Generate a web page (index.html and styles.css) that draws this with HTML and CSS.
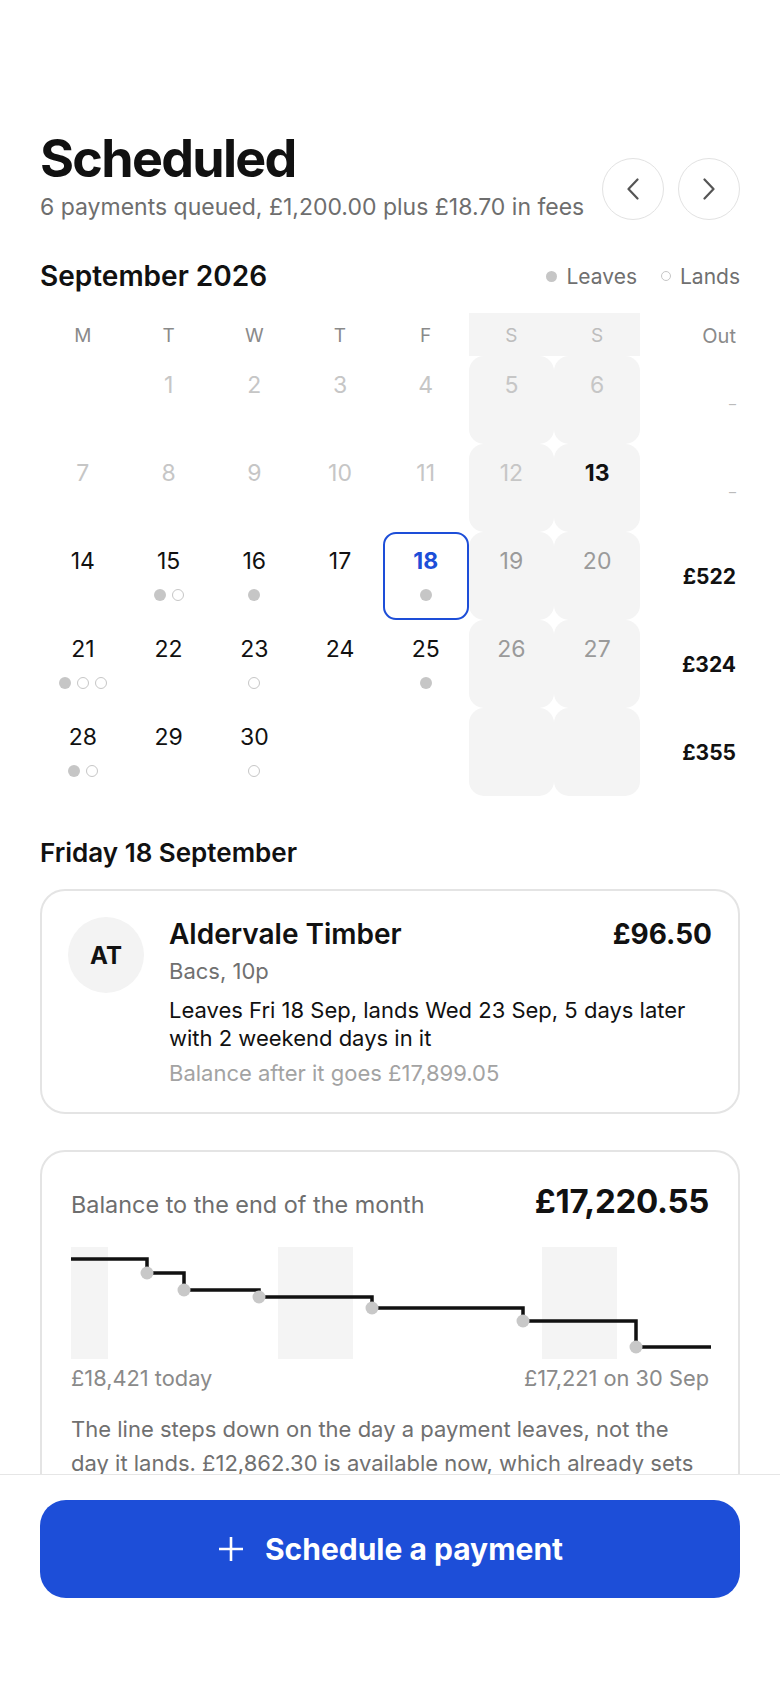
FILE: index.html
```html
<!DOCTYPE html>
<html lang="en">
<head>
    <meta charset="UTF-8">
    <title>Scheduled</title>
    <link rel="stylesheet" href="styles.css">
</head>
<body>
<main class="page">
    <header class="top">
        <div class="top-text">
            <h1 class="title">Scheduled</h1>
            <p class="summary">6 payments queued, £1,200.00 plus £18.70 in fees</p>
        </div>
        <div class="nav">
            <button class="nav-btn" aria-label="Previous month">
                <svg width="14" height="22" viewBox="0 0 14 22"><path d="M11.5 1.5 L2.5 11 L11.5 20.5"/></svg>
            </button>
            <button class="nav-btn" aria-label="Next month">
                <svg width="14" height="22" viewBox="0 0 14 22"><path d="M2.5 1.5 L11.5 11 L2.5 20.5"/></svg>
            </button>
        </div>
    </header>

    <section class="month">
        <div class="month-head">
            <h2 class="month-title">September 2026</h2>
            <div class="legend">
                <span class="dot"></span><span>Leaves</span>
                <span class="dot land gap"></span><span>Lands</span>
            </div>
        </div>

        <div class="cal">
            <div class="wd">M</div>
            <div class="wd">T</div>
            <div class="wd">W</div>
            <div class="wd">T</div>
            <div class="wd">F</div>
            <div class="wd we">S</div>
            <div class="wd we">S</div>
            <div class="wd out">Out</div>

            <div class="day"></div>
            <div class="day past"><span class="num">1</span></div>
            <div class="day past"><span class="num">2</span></div>
            <div class="day past"><span class="num">3</span></div>
            <div class="day past"><span class="num">4</span></div>
            <div class="day we past"><span class="num">5</span></div>
            <div class="day we past"><span class="num">6</span></div>
            <div class="out-val none">–</div>

            <div class="day past"><span class="num">7</span></div>
            <div class="day past"><span class="num">8</span></div>
            <div class="day past"><span class="num">9</span></div>
            <div class="day past"><span class="num">10</span></div>
            <div class="day past"><span class="num">11</span></div>
            <div class="day we past"><span class="num">12</span></div>
            <div class="day we today"><span class="num">13</span></div>
            <div class="out-val none">–</div>

            <div class="day"><span class="num">14</span></div>
            <div class="day"><span class="num">15</span><span class="dots"><i class="dot"></i><i class="dot land"></i></span></div>
            <div class="day"><span class="num">16</span><span class="dots"><i class="dot"></i></span></div>
            <div class="day"><span class="num">17</span></div>
            <div class="day sel"><span class="num">18</span><span class="dots"><i class="dot"></i></span></div>
            <div class="day we"><span class="num">19</span></div>
            <div class="day we"><span class="num">20</span></div>
            <div class="out-val">£522</div>

            <div class="day"><span class="num">21</span><span class="dots"><i class="dot"></i><i class="dot land"></i><i class="dot land"></i></span></div>
            <div class="day"><span class="num">22</span></div>
            <div class="day"><span class="num">23</span><span class="dots"><i class="dot land"></i></span></div>
            <div class="day"><span class="num">24</span></div>
            <div class="day"><span class="num">25</span><span class="dots"><i class="dot"></i></span></div>
            <div class="day we"><span class="num">26</span></div>
            <div class="day we"><span class="num">27</span></div>
            <div class="out-val">£324</div>

            <div class="day"><span class="num">28</span><span class="dots"><i class="dot"></i><i class="dot land"></i></span></div>
            <div class="day"><span class="num">29</span></div>
            <div class="day"><span class="num">30</span><span class="dots"><i class="dot land"></i></span></div>
            <div class="day"></div>
            <div class="day"></div>
            <div class="day we"></div>
            <div class="day we"></div>
            <div class="out-val">£355</div>
        </div>
    </section>

    <h3 class="day-title">Friday 18 September</h3>

    <article class="pay-card">
        <div class="avatar">AT</div>
        <div class="pay-body">
            <div class="pay-row">
                <span class="pay-name">Aldervale Timber</span>
                <span class="pay-amount">£96.50</span>
            </div>
            <div class="pay-method">Bacs, 10p</div>
            <div class="pay-timing">Leaves Fri 18 Sep, lands Wed 23 Sep, 5 days later with 2 weekend days in it</div>
            <div class="pay-after">Balance after it goes £17,899.05</div>
        </div>
    </article>

    <section class="balance-card">
        <div class="bal-head">
            <span class="bal-label">Balance to the end of the month</span>
            <span class="bal-amount">£17,220.55</span>
        </div>
        <svg class="chart" viewBox="0 0 640 112" width="640" height="112">
            <rect x="0" y="0" width="37" height="112" fill="#f4f4f4"/>
            <rect x="207" y="0" width="75" height="112" fill="#f4f4f4"/>
            <rect x="471" y="0" width="75" height="112" fill="#f4f4f4"/>
            <path d="M0 12 H76 V26 H113 V43 H188 V50 H301 V61 H452 V74 H565 V100 H640" fill="none" stroke="#111" stroke-width="3.5"/>
            <g fill="#c8c8c8">
                <circle cx="76" cy="26" r="6.5"/>
                <circle cx="113" cy="43" r="6.5"/>
                <circle cx="188" cy="50" r="6.5"/>
                <circle cx="301" cy="61" r="6.5"/>
                <circle cx="452" cy="74" r="6.5"/>
                <circle cx="565" cy="100" r="6.5"/>
            </g>
        </svg>
        <div class="chart-labels">
            <span>£18,421 today</span>
            <span>£17,221 on 30 Sep</span>
        </div>
        <p class="bal-note">The line steps down on the day a payment leaves, not the day it lands. £12,862.30 is available now, which already sets aside the payments that have left but not yet landed in the other account.</p>
    </section>
</main>

<div class="bottom-bar">
    <button class="cta">
        <svg width="28" height="28" viewBox="0 0 28 28"><path d="M14 2 V26 M2 14 H26"/></svg>
        <span>Schedule a payment</span>
    </button>
</div>
</body>
</html>
```

FILE: styles.css
```css
*{
    margin: 0;
    padding: 0;
    box-sizing: border-box;
}
body{
    background: #fff;
    color: #111;
    font-family: "Inter", "Noto Sans", sans-serif;
}
.page{
    padding: 133px 40px 320px;
}

/* header */
.top{
    display: flex;
    justify-content: space-between;
    align-items: flex-end;
}
.title{
    font-size: 52px;
    line-height: 52px;
    font-weight: 700;
    letter-spacing: -1.7px;
}
.summary{
    margin-top: 8px;
    font-size: 23px;
    line-height: 28px;
    color: #6e6e6e;
}
.nav{
    display: flex;
    gap: 14px;
    margin-bottom: 1px;
}
.nav-btn{
    width: 62px;
    height: 62px;
    border-radius: 50%;
    border: 1.5px solid #e2e2e2;
    background: #fff;
    display: flex;
    align-items: center;
    justify-content: center;
}
.nav-btn path{
    fill: none;
    stroke: #555;
    stroke-width: 2.2;
    stroke-linecap: round;
    stroke-linejoin: round;
}

/* month */
.month{
    margin-top: 39px;
}
.month-head{
    display: flex;
    justify-content: space-between;
    align-items: center;
}
.month-title{
    font-size: 28px;
    line-height: 32px;
    font-weight: 600;
}
.legend{
    display: flex;
    align-items: center;
    font-size: 21px;
    color: #707070;
}
.dot{
    display: inline-block;
    width: 12px;
    height: 12px;
    border-radius: 50%;
    background: #c6c6c6;
}
.dot.land{
    background: none;
    border: 1.7px solid #c6c6c6;
}
.legend .dot{
    width: 11px;
    height: 11px;
    margin-right: 9px;
}
.legend .dot.land{
    width: 10px;
    height: 10px;
}
.legend .dot.gap{
    margin-left: 24px;
}

.cal{
    margin-top: 21px;
    display: grid;
    grid-template-columns: repeat(7, 1fr) 100px;
    grid-template-rows: 43px repeat(5, 88px);
}
.wd{
    display: flex;
    align-items: center;
    justify-content: center;
    padding-top: 2px;
    font-size: 19px;
    color: #8a8a8a;
}
.wd.we{
    background: #f4f4f4;
    color: #bdbdbd;
}
.wd.out{
    justify-content: flex-end;
    padding-right: 4px;
    font-size: 20px;
}
.day{
    display: flex;
    flex-direction: column;
    align-items: center;
    padding-top: 15px;
    font-size: 23px;
    line-height: 28px;
    color: #111;
}
.day.we{
    background: #f4f4f4;
    border-radius: 15px;
    color: #9a9a9a;
}
.day.past{
    color: #c6c6c6;
}
.day.today{
    color: #111;
    font-weight: 700;
}
.day.sel{
    border: 2px solid #1d4ed8;
    border-radius: 13px;
    padding-top: 13px;
    color: #1d4ed8;
    font-weight: 700;
}
.dots{
    display: flex;
    gap: 6px;
    margin-top: 14px;
}
.out-val{
    display: flex;
    align-items: center;
    justify-content: flex-end;
    padding-right: 4px;
    font-size: 21px;
    font-weight: 700;
}
.out-val.none{
    font-size: 14px;
    font-weight: 400;
    color: #bbb;
    padding-top: 6px;
}

/* selected day */
.day-title{
    margin-top: 43px;
    font-size: 26px;
    line-height: 28px;
    font-weight: 600;
}
.pay-card{
    margin-top: 22px;
    display: flex;
    gap: 25px;
    padding: 26px 26px 25px;
    border: 2px solid #e4e4e4;
    border-radius: 25px;
}
.avatar{
    flex: none;
    width: 76px;
    height: 76px;
    border-radius: 50%;
    background: #f3f3f3;
    display: flex;
    align-items: center;
    justify-content: center;
    font-size: 24px;
    font-weight: 700;
}
.pay-body{
    flex: 1;
}
.pay-row{
    display: flex;
    justify-content: space-between;
    align-items: baseline;
    line-height: 34px;
}
.pay-name{
    font-size: 28px;
    font-weight: 600;
}
.pay-amount{
    font-size: 28px;
    font-weight: 700;
}
.pay-method{
    margin-top: 6px;
    font-size: 22px;
    line-height: 28px;
    color: #707070;
}
.pay-timing{
    margin-top: 11px;
    font-size: 22px;
    line-height: 28px;
}
.pay-after{
    margin-top: 7px;
    font-size: 22px;
    line-height: 28px;
    color: #a3a3a3;
}

/* balance */
.balance-card{
    margin-top: 36px;
    padding: 29px 29px 28px;
    border: 2px solid #e4e4e4;
    border-radius: 25px;
}
.bal-head{
    display: flex;
    justify-content: space-between;
    align-items: baseline;
}
.bal-label{
    font-size: 23.4px;
    color: #6e6e6e;
}
.bal-amount{
    font-size: 33px;
    line-height: 40px;
    font-weight: 700;
    letter-spacing: -0.3px;
}
.chart{
    display: block;
    margin-top: 26px;
    width: 640px;
    height: 112px;
    overflow: visible;
}
.chart-labels{
    margin-top: 7px;
    display: flex;
    justify-content: space-between;
    font-size: 21.8px;
    line-height: 24px;
    color: #8a8a8a;
}
.bal-note{
    margin-top: 22px;
    padding-right: 8px;
    font-size: 22px;
    line-height: 34px;
    color: #707070;
}

/* bottom bar */
.bottom-bar{
    position: fixed;
    left: 0;
    right: 0;
    bottom: 0;
    height: 214px;
    background: #fff;
    border-top: 1.5px solid #e6e6e6;
    padding: 25px 40px 0;
}
.cta{
    width: 100%;
    height: 98px;
    border: none;
    border-radius: 26px;
    background: #1d4ed8;
    color: #fff;
    display: flex;
    align-items: center;
    justify-content: center;
    gap: 20px;
    font-family: "Inter", "Noto Sans", sans-serif;
    font-size: 30px;
    font-weight: 700;
}
.cta path{
    stroke: #fff;
    stroke-width: 2.6;
}
```
